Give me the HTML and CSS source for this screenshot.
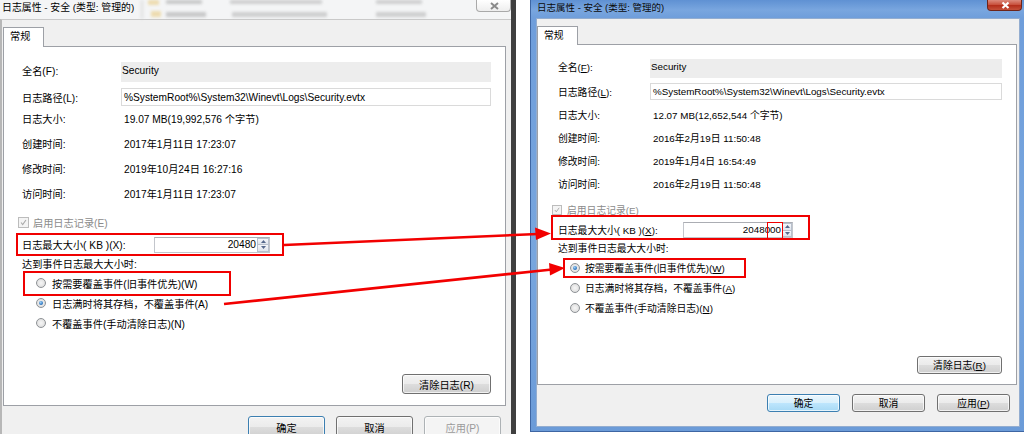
FILE: index.html
```html
<!DOCTYPE html>
<html lang="zh-CN">
<head>
<meta charset="utf-8">
<title>日志属性</title>
<link rel="stylesheet" href="styles.css">
</head>
<body>
<div class="stage">
  <!-- LEFT DIALOG (inactive) -->
  <div class="win win-l">
    <div class="tbar tbar-l">
      <span class="ttl">日志属性 - 安全 (类型: 管理的)</span>
      <span class="close close-l">
        <svg width="35" height="12" viewBox="0 0 35 12"><path d="M14 3 L21 9 M21 3 L14 9" stroke="#8a8a8a" stroke-width="2" fill="none"/></svg>
      </span>
    </div>
    <div class="body body-l">
      <div class="tabs"><div class="tab">常规</div></div>
      <div class="panel">
        <div class="row r-name"><span class="lbl">全名(F):</span><span class="ro">Security</span></div>
        <div class="row r-path"><span class="lbl">日志路径(L):</span><span class="edit">%SystemRoot%\System32\Winevt\Logs\Security.evtx</span></div>
        <div class="row r-info r-first"><span class="lbl">日志大小:</span><span class="val">19.07 MB(19,992,576 个字节)</span></div>
        <div class="row r-info"><span class="lbl">创建时间:</span><span class="val">2017年1月11日 17:23:07</span></div>
        <div class="row r-info"><span class="lbl">修改时间:</span><span class="val">2019年10月24日 16:27:16</span></div>
        <div class="row r-info"><span class="lbl">访问时间:</span><span class="val">2017年1月11日 17:23:07</span></div>
        <div class="row r-check"><span class="chk"><svg viewBox="0 0 11 11"><path d="M2.5 5.5 L4.5 8 L8.5 2.5" stroke="#a9a9a9" stroke-width="1.3" fill="none"/></svg></span><span class="dis">启用日志记录(E)</span></div>
        <div class="row r-max"><span class="lbl lbl-max">日志最大大小( KB )(X):</span>
          <span class="spinbox"><span class="num">20480</span><span class="spin"><span class="sp up"><svg viewBox="0 0 7 4"><path d="M0 4 L3.5 0 L7 4 Z" fill="#56698c"/></svg></span><span class="sp dn"><svg viewBox="0 0 7 4"><path d="M0 0 L3.5 4 L7 0 Z" fill="#56698c"/></svg></span></span></span>
        </div>
        <div class="row r-reach">达到事件日志最大大小时:</div>
        <div class="row r-radio r-r1"><span class="radio"></span><span>按需要覆盖事件(旧事件优先)(W)</span></div>
        <div class="row r-radio"><span class="radio on"></span><span>日志满时将其存档，不覆盖事件(A)</span></div>
        <div class="row r-radio"><span class="radio"></span><span>不覆盖事件(手动清除日志)(N)</span></div>
        <button class="btn clear">清除日志(R)</button>
      </div>
      <div class="btnrow">
        <button class="btn def">确定</button>
        <button class="btn">取消</button>
        <button class="btn off">应用(P)</button>
      </div>
    </div>
  </div>

  <div class="divider"></div>
  <div class="spacer"></div>

  <!-- RIGHT DIALOG (active) -->
  <div class="win win-r">
    <div class="tbar tbar-r">
      <span class="ttl">日志属性 - 安全 (类型: 管理的)</span>
      <span class="close close-r">
        <svg width="35" height="11" viewBox="0 0 35 11"><path d="M14.5 2.5 L20.5 8 M20.5 2.5 L14.5 8" stroke="#fff" stroke-width="2.2" fill="none"/></svg>
      </span>
    </div>
    <div class="body body-r">
      <div class="tabs"><div class="tab">常规</div></div>
      <div class="panel">
        <div class="row r-name"><span class="lbl">全名(<u>F</u>):</span><span class="ro">Security</span></div>
        <div class="row r-path"><span class="lbl">日志路径(<u>L</u>):</span><span class="edit">%SystemRoot%\System32\Winevt\Logs\Security.evtx</span></div>
        <div class="row r-info r-first"><span class="lbl">日志大小:</span><span class="val">12.07 MB(12,652,544 个字节)</span></div>
        <div class="row r-info"><span class="lbl">创建时间:</span><span class="val">2016年2月19日 11:50:48</span></div>
        <div class="row r-info"><span class="lbl">修改时间:</span><span class="val">2019年1月4日 16:54:49</span></div>
        <div class="row r-info"><span class="lbl">访问时间:</span><span class="val">2016年2月19日 11:50:48</span></div>
        <div class="row r-check"><span class="chk"><svg viewBox="0 0 11 11"><path d="M2.5 5.5 L4.5 8 L8.5 2.5" stroke="#a9a9a9" stroke-width="1.3" fill="none"/></svg></span><span class="dis">启用日志记录(E)</span></div>
        <div class="row r-max"><span class="lbl lbl-max">日志最大大小( KB )(<u>X</u>):</span>
          <span class="spinbox"><span class="num">2048000</span><span class="spin"><span class="sp up"><svg viewBox="0 0 7 4"><path d="M0 4 L3.5 0 L7 4 Z" fill="#56698c"/></svg></span><span class="sp dn"><svg viewBox="0 0 7 4"><path d="M0 0 L3.5 4 L7 0 Z" fill="#56698c"/></svg></span></span></span>
        </div>
        <div class="row r-reach">达到事件日志最大大小时:</div>
        <div class="row r-radio r-r1"><span class="radio on"></span><span>按需要覆盖事件(旧事件优先)(<u>W</u>)</span></div>
        <div class="row r-radio"><span class="radio"></span><span>日志满时将其存档，不覆盖事件(<u>A</u>)</span></div>
        <div class="row r-radio"><span class="radio"></span><span>不覆盖事件(手动清除日志)(<u>N</u>)</span></div>
        <button class="btn clear">清除日志(<u>R</u>)</button>
      </div>
      <div class="btnrow">
        <button class="btn def">确定</button>
        <button class="btn">取消</button>
        <button class="btn">应用(<u>P</u>)</button>
      </div>
    </div>
  </div>

  <!-- red annotations -->
  <div class="mark m1"></div>
  <div class="mark m2"></div>
  <div class="mark m3"></div>
  <div class="mark m4"></div>
  <div class="mark m5"></div>
  <svg class="arrows" width="1024" height="434" viewBox="0 0 1024 434">
    <line x1="284" y1="245" x2="538" y2="234" stroke="#f20000" stroke-width="2.6"/>
    <polygon points="551,233.5 535,227.5 536,240" fill="#f20000"/>
    <line x1="224" y1="304" x2="552" y2="269.5" stroke="#f20000" stroke-width="2.6"/>
    <polygon points="565,268 549,263 550,275.5" fill="#f20000"/>
  </svg>
</div>
</body>
</html>
```

FILE: styles.css
```css
* { box-sizing: border-box; margin: 0; padding: 0; }
html, body { width: 1024px; height: 434px; overflow: hidden; background: #fff; }
body { font-family: "Liberation Sans", "Noto Sans CJK SC", sans-serif; color: #000; }
u { text-decoration: underline; text-underline-offset: 1px; }

.stage { position: relative; display: flex; width: 1024px; height: 434px; }

/* ---------- windows ---------- */
.win { display: flex; flex-direction: column; }
.win-l { width: 511px; height: 434px; background: #f0f0f0; font-size: 10.2px; }
.divider { width: 5px; height: 434px; background: #3f3f3f; }
.spacer { width: 14px; height: 434px; background: #fff; }
.win-r {
  width: 494px; height: 432px; font-size: 9.8px;
  padding: 0 4px 4px 5px;
  border-left: 1px solid #3e66a3;
  border-bottom: 1px solid #3e66a3;
  background: linear-gradient(180deg, #5f91d3 0px, #79a6df 10px, #6f9edb 18px, #78a6de 60%, #6b9bd8 100%);
}

/* ---------- title bars ---------- */
.tbar { display: flex; justify-content: space-between; align-items: flex-start; position: relative; flex: none; }
.tbar .ttl { position: relative; z-index: 1; white-space: nowrap; }
.tbar-l { height: 19px; padding-left: 2px; background: #f4f5f6; }
.tbar-l .ttl { font-size: 9.9px; line-height: 16px; }
.tbar-l::before {
  content: ""; position: absolute; inset: 0;
  filter: blur(1.8px); opacity: .42;
  background:
    linear-gradient(#e4b94f, #e4b94f) 148px 0 / 11px 5px no-repeat,
    linear-gradient(#e4b94f, #e4b94f) 151px 11px / 10px 6px no-repeat,
    linear-gradient(#8a8a8a, #8a8a8a) 166px 0 / 36px 4px no-repeat,
    linear-gradient(#8a8a8a, #8a8a8a) 166px 12px / 40px 5px no-repeat,
    linear-gradient(#9a9a9a, #9a9a9a) 230px 0 / 92px 4px no-repeat,
    linear-gradient(#9a9a9a, #9a9a9a) 232px 12px / 95px 5px no-repeat,
    linear-gradient(#9a9a9a, #9a9a9a) 376px 0 / 46px 4px no-repeat,
    linear-gradient(#9a9a9a, #9a9a9a) 376px 12px / 50px 5px no-repeat,
    linear-gradient(#d6d6d6, #d6d6d6) 140px 0 / 4px 19px no-repeat;
}
.close { display: block; flex: none; position: relative; z-index: 1; }
.close svg { display: block; }
.close-l {
  width: 35px; height: 12px;
  background: linear-gradient(#ffffff, #eeeeee);
  border: 1px solid #a9a9a9; border-top: none;
  border-radius: 0 0 4px 4px;
}
.tbar-r { height: 18px; padding-left: 1px; }
.tbar-r .ttl { font-size: 9.5px; line-height: 16px; color: #0a0a0a; }
.close-r {
  width: 35px; height: 11px; margin-right: -2px;
  background: linear-gradient(#dc8a7c 0%, #c9533f 45%, #b42f1c 55%, #c4503a 100%);
  border: 1px solid #6e2418; border-top: none;
  border-radius: 0 0 4px 4px;
}

/* ---------- body ---------- */
.body { flex: 1; display: flex; flex-direction: column; background: #f0f0f0; }
.body-l { border-top: 1px solid #c9c9c9; border-left: 2px solid #b7b7b7; padding: 7px 0 0 1px; }
.body-r { border: 1px solid #93add0; padding: 7px 2px 0 0; }

.tabs { display: flex; flex: none; position: relative; z-index: 1; }
.tab {
  background: #fff; border: 1px solid #9da0a6; border-bottom: none;
  margin-bottom: -1px; padding-left: 6px;
}
.body-l .tab { width: 41px; height: 20px; line-height: 18px; }
.body-r .tab { width: 41px; height: 19px; line-height: 17px; padding-left: 6px; }

.panel {
  display: flex; flex-direction: column; flex: none;
  background: #fff; border: 1px solid #9da0a6;
}
.body-l .panel { width: 503px; height: 360px; padding: 15px 14px 11px 18px; }
.body-r .panel { width: 480px; height: 341px; padding: 14px 14px 10px 20px; }

.row { display: flex; align-items: center; flex: none; white-space: nowrap; }
.lbl { flex: none; }
.body-l .lbl { width: 99px; }
.body-r .lbl { width: 92px; }
.body-l .lbl-max { width: 132px; }
.body-r .lbl-max { width: 125px; }

.ro { flex: 1; align-self: stretch; display: flex; align-items: center; background: #ededed; padding: 0 0 4px 1px; }
.r-name .lbl { padding-bottom: 4px; }
.edit { flex: 1; align-self: stretch; display: flex; align-items: center; background: #fff; border: 1px solid #dadada; padding-left: 2px; }
.val { padding-left: 3px; }

.body-l .r-name { height: 20px; }
.body-l .r-path { height: 18px; margin-top: 6px; }
.body-l .r-info { height: 25px; }
.body-l .r-check { height: 21px; margin-top: 6px; }
.body-l .r-max { height: 23px; }
.body-l .r-reach { height: 15px; }
.body-l .r-radio { height: 20px; padding-left: 14px; }
.body-l .r-r1 { margin-top: 2px; }

.body-r .r-name { height: 19px; }
.body-r .r-path { height: 17px; margin-top: 5px; }
.body-r .r-info { height: 23px; }
.body-r .r-first { margin-top: 3px; }
.body-r .r-check { height: 20px; margin-top: 5px; }
.body-r .r-max { height: 20px; }
.body-r .r-reach { height: 15px; }
.body-r .r-radio { height: 20px; padding-left: 12px; }
.body-r .r-r1 { margin-top: 3px; }

/* checkbox */
.chk { flex: none; display: block; background: #f4f4f4; border: 1px solid #bcbcbc; }
.chk svg { display: block; width: 100%; height: 100%; }
.body-l .chk { width: 11px; height: 11px; margin-left: -4px; margin-right: 4px; }
.body-r .chk { width: 10px; height: 10px; margin-left: -6px; margin-right: 5px; }
.dis { color: #8b8b8b; }

/* spin box */
.spinbox { display: flex; height: 16px; background: #fff; border: 1px solid #c3c6cc; border-top-color: #abadb3; }
.body-l .spinbox { width: 116px; }
.body-r .spinbox { width: 110px; }
.num { flex: 1; text-align: right; line-height: 14px; padding-right: 1px; }
.spin { display: flex; flex-direction: column; flex: none; }
.body-l .spin { width: 12px; }
.body-r .spin { width: 10px; }
.sp { flex: 1; display: flex; align-items: center; justify-content: center; background: linear-gradient(#f5f7fa, #dfe4ec); border: 1px solid #b8c0cc; }
.sp.dn { border-top: none; }
.sp svg { width: 5px; height: 3px; display: block; }

/* radios */
.radio {
  flex: none; display: block; position: relative; border-radius: 50%;
  border: 1px solid #8e9296;
  background: radial-gradient(circle at 50% 50%, #f6f6f6 0%, #e6e6e6 55%, #cfcfcf 100%);
}
.body-l .radio { width: 10px; height: 10px; margin-right: 6px; }
.body-r .radio { width: 10px; height: 10px; margin-right: 5px; }
.radio.on::after {
  content: ""; position: absolute; left: 2px; top: 2px; width: 4px; height: 4px; border-radius: 50%;
  background: radial-gradient(circle at 40% 35%, #9fd0f7 0%, #3a82c9 55%, #1b4f8f 100%);
}

/* buttons */
.btn {
  font: inherit; color: #000; display: flex; align-items: center; justify-content: center;
  border: 1px solid #707070; border-radius: 3px;
  background: linear-gradient(#f3f3f3 0%, #ebebeb 49%, #dddddd 50%, #cfcfcf 100%);
  box-shadow: inset 0 0 0 1px rgba(255,255,255,.7);
  white-space: nowrap;
}
.btn.def { border-color: #3c7fb1; }
.win-r .btn.def { background: linear-gradient(#eaf6fd 0%, #d9f0fc 49%, #bee6fd 50%, #a7d9f5 100%); }
.btn.off { color: #9a9a9a; border-color: #adb2b5; background: #f4f4f4; }
.clear { margin-top: auto; align-self: flex-end; }
.body-l .clear { width: 89px; height: 20px; }
.body-r .clear { width: 85px; height: 18px; }

.btnrow { display: flex; justify-content: flex-end; flex: none; }
.body-l .btnrow { gap: 11px; padding: 10px 10px 0 0; }
.body-l .btnrow .btn { width: 77px; height: 22px; }
.body-r .btnrow { gap: 12px; padding: 9px 7px 0 0; }
.body-r .btnrow .btn { width: 73px; height: 18px; }

/* ---------- annotations ---------- */
.mark { position: absolute; border: 2px solid #f00000; pointer-events: none; }
.m1 { left: 16px; top: 233px; width: 268px; height: 23px; }
.m2 { left: 23px; top: 271px; width: 208px; height: 25px; }
.m3 { left: 551px; top: 215px; width: 259px; height: 25px; }
.m4 { left: 767px; top: 222px; width: 16px; height: 17px; border-width: 1.5px; }
.m5 { left: 563px; top: 258px; width: 183px; height: 20px; }
.arrows { position: absolute; left: 0; top: 0; pointer-events: none; }
```
